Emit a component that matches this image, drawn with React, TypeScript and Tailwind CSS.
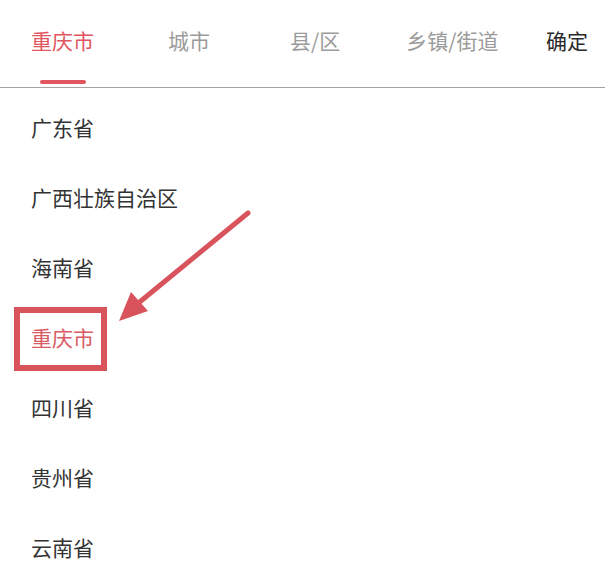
const tabs = [
  { label: '重庆市', ml: 'ml-[31px]', active: true },
  { label: '城市', ml: 'ml-[74px]', active: false },
  { label: '县/区', ml: 'ml-[80px]', active: false },
  { label: '乡镇/街道', ml: 'ml-[66px]', active: false },
];

const provinces = ['广东省', '广西壮族自治区', '海南省', '重庆市', '四川省', '贵州省', '云南省'];

const App = () => {
  return (
    <div
      className="relative h-[569px] w-[605px] overflow-hidden bg-white"
      style={{ fontFamily: '"Noto Sans CJK SC", "Noto Sans", sans-serif' }}
    >
      {/* Tabs */}
      <div className="flex h-[88px] border-b border-[#a3a3a3]">
        {tabs.map((tab) => (
          <div key={tab.label} className={`${tab.ml} flex flex-col items-center pt-[27px]`}>
            <span
              className={`text-[21px] leading-[26px] ${tab.active ? 'text-[#e2565f]' : 'text-[#9b9b9b]'}`}
            >
              {tab.label}
            </span>
            {tab.active && <span className="mt-[27px] h-[4px] w-[46px] rounded-full bg-[#e2565f]" />}
          </div>
        ))}
        <div className="ml-auto mr-[17px] pt-[27px]">
          <span className="text-[21px] leading-[26px] text-[#2a2a2a]">确定</span>
        </div>
      </div>

      {/* Province list */}
      <ul className="pt-[4px]">
        {provinces.map((name) => {
          const selected = name === '重庆市';
          return (
            <li key={name} className="flex h-[70px] items-center pl-[31px]">
              <span className={`text-[21px] leading-[26px] ${selected ? 'text-[#d95b64]' : 'text-[#333]'}`}>
                {name}
              </span>
            </li>
          );
        })}
      </ul>

      {/* Highlight box */}
      <div className="absolute left-[14px] top-[307px] h-[64px] w-[93px] border-[6px] border-[#d9535c]" />

      {/* Arrow */}
      <svg className="absolute left-0 top-0" width="605" height="569" viewBox="0 0 605 569">
        <line x1="248" y1="213" x2="136" y2="305" stroke="#d9535c" strokeWidth="5" strokeLinecap="round" />
        <polygon points="119,321 131,292 148,311" fill="#d9535c" />
      </svg>
    </div>
  );
};

export default App;
